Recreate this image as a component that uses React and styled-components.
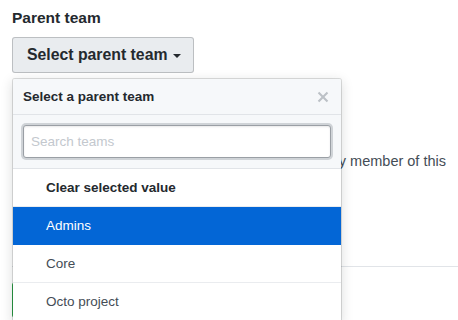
import React from 'react'
import styled, { createGlobalStyle } from 'styled-components'

const GlobalStyle = createGlobalStyle`
  body {
    margin: 0;
    background: #fff;
    font-family: "Liberation Sans", Arial, sans-serif;
    color: #24292e;
    overflow: hidden;
  }
`

const Page = styled.div`
  padding: 8px 12px 0;
  width: 458px;
  height: 320px;
  box-sizing: border-box;
  overflow: hidden;
`

const Label = styled.div`
  font-size: 15.5px;
  font-weight: bold;
  line-height: 20px;
  margin-bottom: 9px;
`

const Picker = styled.div`
  position: relative;
`

const SelectButton = styled.button`
  display: inline-flex;
  align-items: center;
  gap: 6px;
  height: 36px;
  padding: 0 12px 0 14px;
  font-family: inherit;
  font-size: 15.8px;
  font-weight: bold;
  color: #24292e;
  background: #e9ecef;
  border: 1px solid rgba(27, 31, 35, 0.22);
  border-radius: 3px;
`

const Caret = styled.span`
  width: 0;
  height: 0;
  border-left: 4px solid transparent;
  border-right: 4px solid transparent;
  border-top: 4px solid #24292e;
  margin-top: 2px;
`

const Menu = styled.div`
  position: absolute;
  top: 41px;
  left: 0;
  width: 328px;
  background: #fff;
  background-clip: padding-box;
  border: 1px solid rgba(27, 31, 35, 0.15);
  border-radius: 3px 3px 0 0;
  box-shadow: 0 3px 12px rgba(27, 31, 35, 0.15);
  overflow: hidden;
`

const MenuHeader = styled.div`
  display: flex;
  align-items: center;
  justify-content: space-between;
  height: 35px;
  padding: 0 12px 0 10px;
  background: #f6f8fa;
  border-bottom: 1px solid #e1e4e8;
  font-size: 13.5px;
  font-weight: bold;
`

const CloseIcon = styled.svg`
  display: block;
  width: 12px;
  height: 16px;
  fill: #bcc1c6;
`

const Filter = styled.div`
  padding: 10px;
  background: #f6f8fa;
  border-bottom: 1px solid #e1e4e8;
`

const SearchInput = styled.input`
  display: block;
  width: 100%;
  box-sizing: border-box;
  height: 33px;
  padding: 0 7px;
  font-family: inherit;
  font-size: 13.5px;
  color: #24292e;
  background: #fff;
  border: 1px solid #9a9fa5;
  border-radius: 3px;
  box-shadow: 0 0 0 2px rgba(160, 166, 172, 0.45), inset 0 1px 2px rgba(27, 31, 35, 0.1);
  outline: none;

  &::placeholder {
    color: #c3c8ce;
  }
`

const Item = styled.div`
  display: flex;
  align-items: center;
  height: 37px;
  padding-left: 33px;
  font-size: 13.5px;
  font-weight: ${p => (p.$bold ? 'bold' : 'normal')};
  color: ${p => (p.$selected ? '#fff' : p.$bold ? '#24292e' : '#444d56')};
  background: ${p => (p.$selected ? '#0366d6' : '#fff')};
  border-bottom: 1px solid ${p => (p.$selected ? '#0366d6' : '#eaecef')};
`

const Note = styled.p`
  margin: 0;
  padding-top: 78px;
  font-size: 14.5px;
  line-height: 20px;
  color: #444d56;
  text-align: right;
`

const Divider = styled.hr`
  margin: 95px -12px 0 0;
  border: 0;
  border-top: 1px solid #e1e4e8;
`

const GreenButton = styled.div`
  margin-top: 15px;
  width: 120px;
  height: 34px;
  border: 1px solid #28a745;
  border-radius: 3px;
  background: #2cbe4e;
`

const teams = ['Admins', 'Core', 'Octo project']

export default function App () {
  return (
    <Page>
      <GlobalStyle />
      <Label>Parent team</Label>
      <Picker>
        <SelectButton>Select parent team <Caret /></SelectButton>
        <Note>every member of this</Note>
        <Divider />
        <GreenButton />
        <Menu>
          <MenuHeader>
            Select a parent team
            <CloseIcon viewBox='0 0 12 16' aria-label='Close'>
              <path d='M7.48 8l3.75 3.75-1.48 1.48L6 9.48l-3.75 3.75-1.48-1.48L4.52 8 .77 4.25l1.48-1.48L6 6.52l3.75-3.75 1.48 1.48L7.48 8z' />
            </CloseIcon>
          </MenuHeader>
          <Filter>
            <SearchInput placeholder='Search teams' />
          </Filter>
          <Item $bold>Clear selected value</Item>
          {teams.map(team => (
            <Item key={team} $selected={team === 'Admins'}>{team}</Item>
          ))}
        </Menu>
      </Picker>
    </Page>
  )
}
